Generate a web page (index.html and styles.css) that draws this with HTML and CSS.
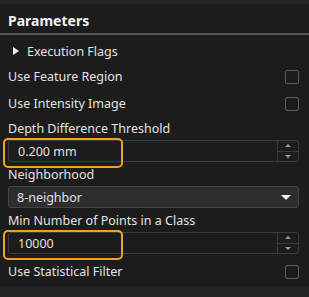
FILE: index.html
```html
<!DOCTYPE html>
<html lang="en">
<head>
    <meta charset="UTF-8">
    <title>Parameters</title>
    <link rel="stylesheet" href="styles.css">
</head>
<body>
    <div class="panel">
        <div class="top-strip"></div>
        <h1 class="panel-title">Parameters</h1>

        <div class="params">
            <div class="row group">
                <span class="caret"></span>
                <span>Execution Flags</span>
            </div>

            <div class="row">
                <span>Use Feature Region</span>
                <span class="check"></span>
            </div>

            <div class="row">
                <span>Use Intensity Image</span>
                <span class="check"></span>
            </div>

            <div class="field">
                <label>Depth Difference Threshold</label>
                <div class="spin highlight">
                    <span class="value">0.200 mm</span>
                    <div class="spin-buttons">
                        <span class="up"></span>
                        <span class="down"></span>
                    </div>
                </div>
            </div>

            <div class="field">
                <label>Neighborhood</label>
                <div class="select">
                    <span class="value">8-neighbor</span>
                    <span class="arrow"></span>
                </div>
            </div>

            <div class="field">
                <label>Min Number of Points in a Class</label>
                <div class="spin highlight">
                    <span class="value">10000</span>
                    <div class="spin-buttons">
                        <span class="up"></span>
                        <span class="down"></span>
                    </div>
                </div>
            </div>

            <div class="row last">
                <span>Use Statistical Filter</span>
                <span class="check"></span>
            </div>
        </div>

        <div class="bottom-strip"></div>
    </div>
</body>
</html>
```

FILE: styles.css
```css
* {
    box-sizing: border-box;
    margin: 0;
    padding: 0;
}

body {
    background: #1c1c1c;
    font-family: 'Noto Sans', 'Open Sans', sans-serif;
    font-size: 12.5px;
    color: #e2e2e2;
}

.panel {
    width: 309px;
    height: 297px;
    display: flex;
    flex-direction: column;
    background: #1c1c1c;
}

.top-strip {
    height: 4px;
    background: #252525;
}

.panel-title {
    font-size: 14px;
    font-weight: 700;
    color: #f2f2f2;
    padding: 7px 8px 0;
    height: 31px;
    border-bottom: 2px solid #575757;
}

.params {
    flex: 1;
    padding: 4px 10px 0 8px;
}

.row {
    height: 27px;
    display: flex;
    align-items: center;
    justify-content: space-between;
}

.row.group {
    justify-content: flex-start;
    gap: 8px;
    padding-left: 5px;
    height: 24px;
}

.row.last {
    margin-top: 4px;
}

.caret {
    width: 0;
    height: 0;
    border-top: 4px solid transparent;
    border-bottom: 4px solid transparent;
    border-left: 6px solid #f0f0f0;
}

.check {
    width: 14px;
    height: 14px;
    border: 1px solid #5a5a5a;
    border-radius: 2px;
}

.field label {
    display: block;
    height: 20px;
    line-height: 20px;
    margin-bottom: 1px;
}

.field {
    margin-top: 2px;
}

.field + .field {
    margin-top: 3px;
}

.spin, .select {
    position: relative;
    height: 22px;
    display: flex;
    align-items: center;
    justify-content: space-between;
    border: 1px solid #3c3c3c;
    border-radius: 3px;
}

.spin .value {
    padding-left: 9px;
}

.spin.highlight::after {
    content: '';
    position: absolute;
    left: -6px;
    top: -3px;
    width: 116px;
    height: 26px;
    border: 2px solid #f0a028;
    border-radius: 5px;
}

.spin-buttons {
    width: 21px;
    height: 100%;
    border-left: 1px solid #3c3c3c;
    display: flex;
    flex-direction: column;
}

.spin-buttons span {
    flex: 1;
    display: flex;
    align-items: center;
    justify-content: center;
}

.spin-buttons .up {
    border-bottom: 1px solid #3c3c3c;
}

.spin-buttons .up::before,
.spin-buttons .down::before {
    content: '';
    border-left: 3px solid transparent;
    border-right: 3px solid transparent;
}

.spin-buttons .up::before {
    border-bottom: 3px solid #9a9a9a;
}

.spin-buttons .down::before {
    border-top: 3px solid #9a9a9a;
}

.select {
    background: #2d2d2d;
    border-color: #454545;
    padding: 0 7px 0 8px;
}

.arrow {
    border-left: 5px solid transparent;
    border-right: 5px solid transparent;
    border-top: 5px solid #f0f0f0;
}

.bottom-strip {
    height: 11px;
    background: #222222;
}
```
